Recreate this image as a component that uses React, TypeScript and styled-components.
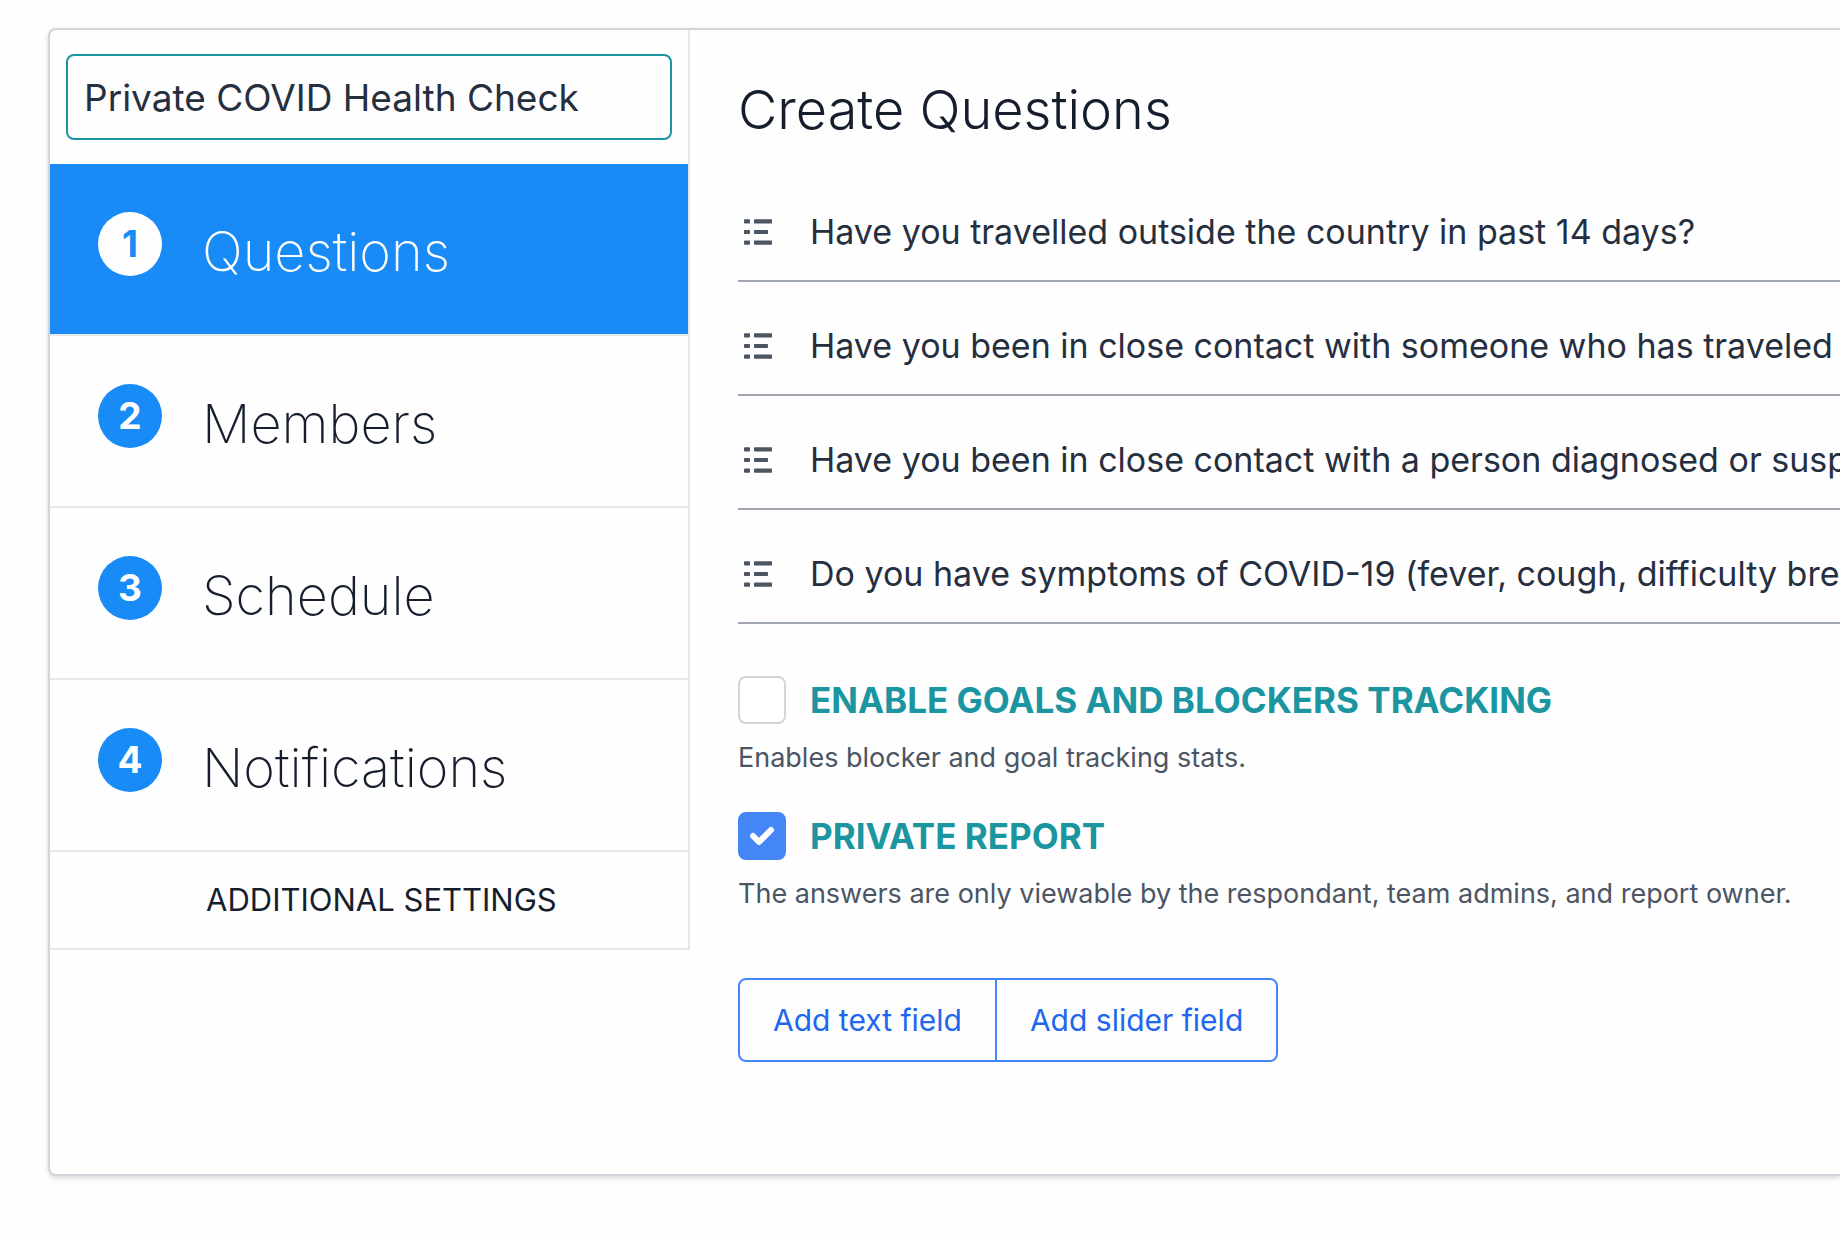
import React, { useState } from "react";
import styled, { createGlobalStyle } from "styled-components";

const GlobalStyle = createGlobalStyle`
  *, *::before, *::after { box-sizing: border-box; }
  body {
    margin: 0;
    background: #fefefe;
    color: #252f3f;
    font-family: Inter, "Liberation Sans", sans-serif;
    overflow-x: hidden;
    -webkit-font-smoothing: antialiased;
  }
  h1, p, ul, ol { margin: 0; padding: 0; }
  ul, ol { list-style: none; }
  button, input { font-family: inherit; }
`;

const Page = styled.main`
  padding: 28px 0 58px 48px;
`;

const Card = styled.section`
  display: flex;
  align-items: flex-start;
  background: #fefefe;
  border: 2px solid #d2d6dc;
  border-right: 0;
  border-radius: 8px 0 0 8px;
  box-shadow: 0 2px 6px rgba(0, 0, 0, 0.1), 0 2px 4px rgba(0, 0, 0, 0.06);
`;

const Sidebar = styled.aside`
  flex: 0 0 640px;
  border-right: 2px solid #e5e7eb;
`;

const NameField = styled.div`
  padding: 24px 16px;
`;

const NameInput = styled.input`
  display: block;
  width: 100%;
  height: 86px;
  padding: 0 16px;
  border: 2px solid #1b95a0;
  border-radius: 8px;
  background: transparent;
  color: #252f3f;
  font-size: 37px;
  outline: none;
`;

const Step = styled.button<{ $active: boolean }>`
  display: flex;
  align-items: flex-start;
  gap: 40px;
  width: 100%;
  padding: 48px 48px 42px;
  border: 0;
  border-bottom: 2px solid #e5e7eb;
  background: ${(p) => (p.$active ? "#188bf6" : "transparent")};
  background-clip: padding-box;
  color: ${(p) => (p.$active ? "#fefefe" : "#161e2e")};
  text-align: left;
  cursor: pointer;
`;

const StepNumber = styled.span<{ $active: boolean }>`
  flex: none;
  width: 64px;
  border-radius: 50%;
  background: ${(p) => (p.$active ? "#fefefe" : "#188bf6")};
  color: ${(p) => (p.$active ? "#188bf6" : "#fefefe")};
  font-size: 37px;
  font-weight: 700;
  line-height: 64px;
  text-align: center;
`;

const StepName = styled.span`
  font-size: 54px;
  font-weight: 250;
  line-height: 80px;
`;

const MoreSettings = styled.button`
  display: block;
  width: 100%;
  padding: 24px 24px 24px 156px;
  border: 0;
  border-bottom: 2px solid #e5e7eb;
  background: transparent;
  color: #161e2e;
  font-size: 31px;
  line-height: 48px;
  text-align: left;
  text-transform: uppercase;
  cursor: pointer;
`;

const Content = styled.div`
  flex: 1;
  min-width: 0;
  padding: 48px 0 112px 48px;
`;

const Title = styled.h1`
  color: #161e2e;
  font-size: 54px;
  font-weight: 300;
  line-height: 64px;
`;

const QuestionList = styled.ul`
  margin-top: 26px;
`;

const Question = styled.li`
  display: flex;
  align-items: center;
  gap: 32px;
  padding: 40px 0 24px 4px;
  border-bottom: 2px solid #9fa6b2;
  svg {
    flex: none;
  }
`;

const QuestionText = styled.span`
  font-size: 34px;
  line-height: 48px;
  white-space: nowrap;
`;

const Options = styled.div`
  display: grid;
  gap: 34px;
  margin-top: 52px;
`;

const OptionLabel = styled.label`
  display: flex;
  align-items: center;
  gap: 24px;
  color: #1b95a0;
  font-size: 35px;
  font-weight: 700;
  line-height: 48px;
  text-transform: uppercase;
  cursor: pointer;
`;

const Tick = styled.span`
  position: relative;
  flex: none;
  width: 48px;
  height: 48px;
  svg {
    position: absolute;
    inset: 0;
    pointer-events: none;
  }
`;

const TickInput = styled.input`
  appearance: none;
  display: block;
  width: 100%;
  height: 100%;
  margin: 0;
  border: 2px solid #d2d6dc;
  border-radius: 8px;
  background: #ffffff;
  &:checked {
    border-color: #4586f7;
    background: #4586f7;
  }
`;

const Help = styled.p`
  margin-top: 14px;
  color: #4b5563;
  font-size: 27px;
  line-height: 40px;
`;

const ButtonGroup = styled.div`
  display: inline-flex;
  margin-top: 64px;
  border: 2px solid #4586f7;
  border-radius: 8px;
`;

const GroupButton = styled.button`
  padding: 16px 33px;
  border: 0;
  background: transparent;
  color: #2166ee;
  font-size: 30px;
  line-height: 48px;
  cursor: pointer;
  & + & {
    border-left: 2px solid #4586f7;
  }
`;

const ListIcon = () => (
  <svg width="36" height="36" viewBox="0 0 36 36" fill="#4b5563" aria-hidden="true">
    <rect x="2" y="5.3" width="6" height="4.2" rx="0.8" />
    <rect x="12" y="5.3" width="18" height="4.2" rx="0.8" />
    <rect x="2" y="15.9" width="6" height="4.2" rx="0.8" />
    <rect x="12" y="15.9" width="14" height="4.2" rx="0.8" />
    <rect x="2" y="26.5" width="6" height="4.2" rx="0.8" />
    <rect x="12" y="26.5" width="18" height="4.2" rx="0.8" />
  </svg>
);

const CheckIcon = () => (
  <svg viewBox="0 0 16 16" fill="#fefefe" aria-hidden="true">
    <path d="M5.707 7.293a1 1 0 0 0-1.414 1.414l2 2a1 1 0 0 0 1.414 0l4-4a1 1 0 0 0-1.414-1.414L7 8.586 5.707 7.293z" />
  </svg>
);

const steps = ["Questions", "Members", "Schedule", "Notifications"];

const questions = [
  "Have you travelled outside the country in past 14 days?",
  "Have you been in close contact with someone who has traveled",
  "Have you been in close contact with a person diagnosed or susp",
  "Do you have symptoms of COVID-19 (fever, cough, difficulty bre",
];

function Option(props: { id: string; label: string; help: string; initial: boolean }) {
  const [checked, setChecked] = useState(props.initial);
  return (
    <div>
      <OptionLabel htmlFor={props.id}>
        <Tick>
          <TickInput
            id={props.id}
            type="checkbox"
            checked={checked}
            aria-describedby={props.id + "-help"}
            onChange={(e) => setChecked(e.target.checked)}
          />
          {checked && <CheckIcon />}
        </Tick>
        {props.label}
      </OptionLabel>
      <Help id={props.id + "-help"}>{props.help}</Help>
    </div>
  );
}

export default function App() {
  const [name, setName] = useState("Private COVID Health Check");
  const [current, setCurrent] = useState(0);
  return (
    <Page>
      <GlobalStyle />
      <Card>
        <Sidebar>
          <NameField>
            <NameInput
              type="text"
              aria-label="Report name"
              value={name}
              onChange={(e) => setName(e.target.value)}
            />
          </NameField>
          <ol>
            {steps.map((step, i) => (
              <li key={step}>
                <Step type="button" $active={i === current} onClick={() => setCurrent(i)}>
                  <StepNumber $active={i === current}>{i + 1}</StepNumber>
                  <StepName>{step}</StepName>
                </Step>
              </li>
            ))}
          </ol>
          <MoreSettings type="button">Additional settings</MoreSettings>
        </Sidebar>
        <Content>
          <Title>Create Questions</Title>
          <QuestionList>
            {questions.map((q) => (
              <Question key={q}>
                <ListIcon />
                <QuestionText>{q}</QuestionText>
              </Question>
            ))}
          </QuestionList>
          <Options>
            <Option
              id="goals"
              label="Enable goals and blockers tracking"
              help="Enables blocker and goal tracking stats."
              initial={false}
            />
            <Option
              id="private"
              label="Private report"
              help="The answers are only viewable by the respondant, team admins, and report owner."
              initial={true}
            />
          </Options>
          <ButtonGroup>
            <GroupButton type="button">Add text field</GroupButton>
            <GroupButton type="button">Add slider field</GroupButton>
          </ButtonGroup>
        </Content>
      </Card>
    </Page>
  );
}
